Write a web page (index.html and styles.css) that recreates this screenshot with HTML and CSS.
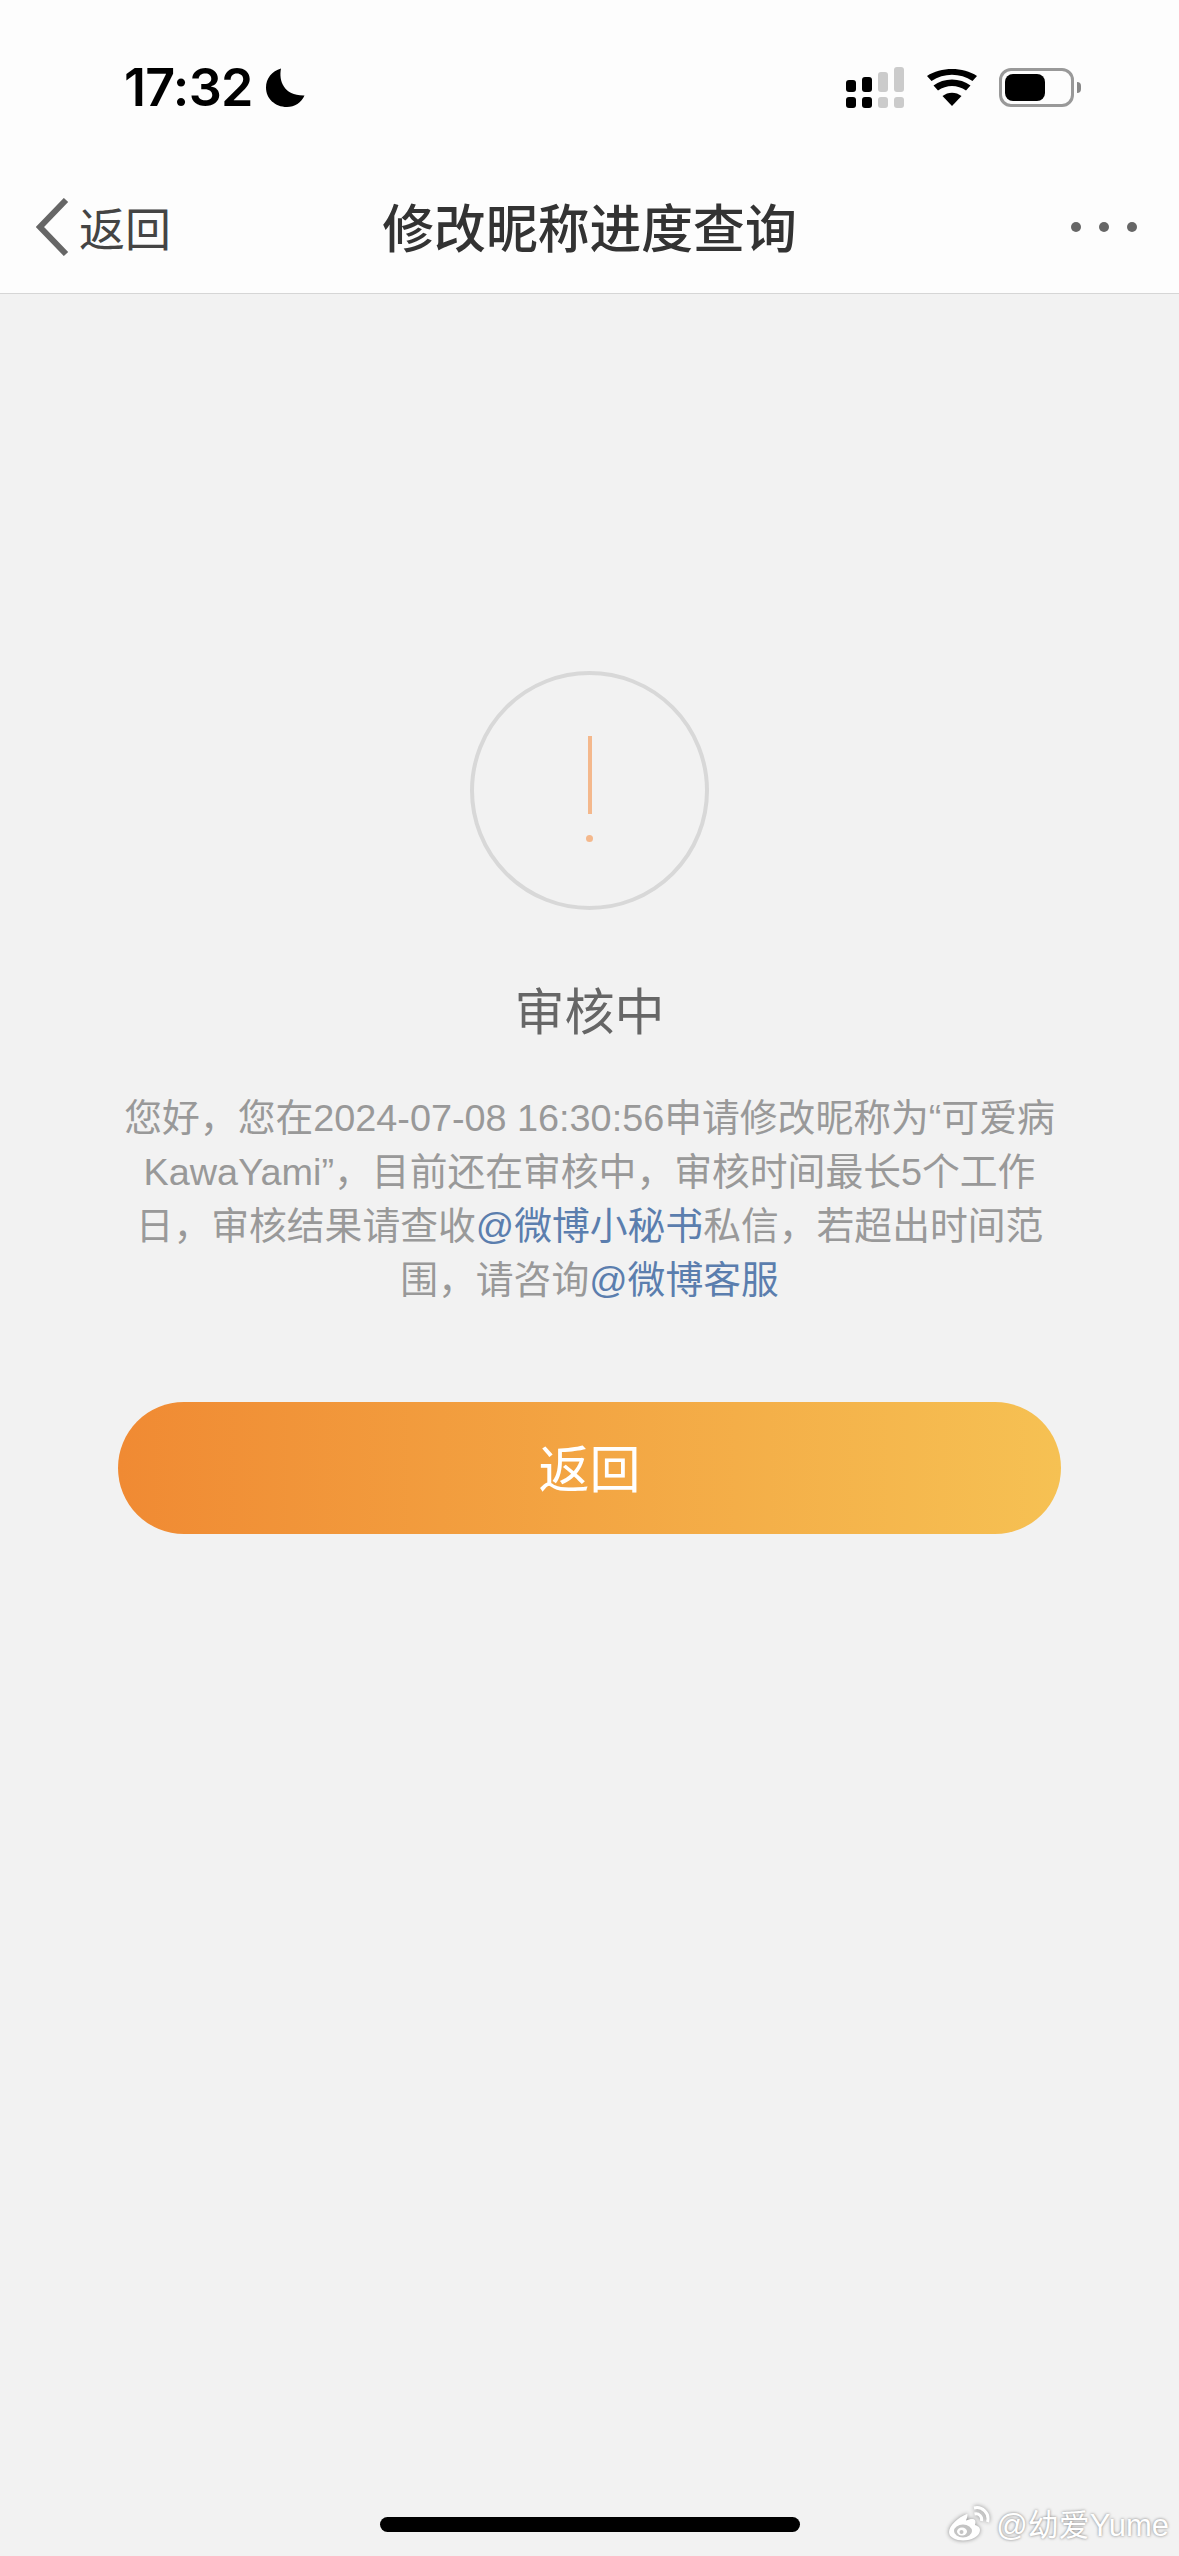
FILE: index.html
```html
<!DOCTYPE html>
<html lang="zh-CN">
<head>
  <meta charset="UTF-8" />
  <meta name="viewport" content="width=device-width, initial-scale=1.0"/>
  <title>修改昵称进度查询</title>
  <link rel="stylesheet" href="styles.css">
</head>
<body>
  <header class="top">
    <!-- Status Bar -->
    <div class="status-bar">
      <div class="status-left">
        <span class="time">17:32</span>
        <svg class="moon" viewBox="0 0 39 39"><path d="M15 0.5C12.5 13 18 28 38.5 27.5C35.5 34.500 28.500 39 21 39C9 39 0 30.500 0 19.500C0 10.500 6 3 15 0.500Z"/></svg>
      </div>
      <div class="status-right">
        <div class="signal">
          <span class="sig-col"><i class="sig-top h1"></i><i class="sig-dot"></i></span>
          <span class="sig-col"><i class="sig-top h2"></i><i class="sig-dot"></i></span>
          <span class="sig-col off"><i class="sig-top h3"></i><i class="sig-dot"></i></span>
          <span class="sig-col off"><i class="sig-top h4"></i><i class="sig-dot"></i></span>
        </div>
        <svg class="wifi" viewBox="0 0 50 37">
          <path d="M25 37L15.500 27C21 22.500 29 22.500 34.500 27Z"/>
          <path d="M11 21.500L6.500 16.500C16.500 8.500 33.500 8.500 43.500 16.500L39 21.500C30.500 15.500 19.500 15.500 11 21.500Z"/>
          <path d="M4.500 12L0 7C14 -2.300 36 -2.300 50 7L45.500 12C33 3.800 17 3.800 4.500 12Z"/>
        </svg>
        <div class="battery">
          <div class="battery-body"><div class="battery-fill"></div></div>
          <div class="battery-nub"></div>
        </div>
      </div>
    </div>

    <!-- Nav Bar -->
    <nav class="nav-bar">
      <div class="nav-back">
        <svg class="chevron" viewBox="0 0 33 58"><path d="M30 2L4 29L30 56"/></svg>
        <span>返回</span>
      </div>
      <h1 class="nav-title">修改昵称进度查询</h1>
      <div class="nav-more"><i></i><i></i><i></i></div>
    </nav>
  </header>

  <main class="content">
    <div class="status-icon">
      <span class="mark-line"></span>
      <span class="mark-dot"></span>
    </div>
    <h2 class="status-title">审核中</h2>
    <p class="status-text">您好，您在2024-07-08 16:30:56申请修改昵称为“可爱病KawaYami”，目前还在审核中，审核时间最长5个工作日，审核结果请查收<a class="link">@微博小秘书</a>私信，若超出时间范围，请咨询<a class="link">@微博客服</a></p>
    <button class="back-btn">返回</button>
  </main>

  <div class="home-row"><div class="home-bar"></div></div>

  <!-- Watermark -->
  <div class="watermark">
    <svg class="wm-logo" viewBox="0 0 41 36">
      <path class="wm-shape" d="M18 9C9 12 0 21 0 27C0 32.500 7 35.500 14 35.500C23 35.500 31 31 31 25C31 21.500 27.500 20.500 26 20C27 17 26.500 14.500 24 14C22 13.700 19.500 14.500 17 15.500C18.500 12 19 8.500 18 9Z"/>
      <ellipse class="wm-hole" cx="14" cy="26" rx="9" ry="6.500"/>
      <ellipse class="wm-shape" cx="13" cy="26.500" rx="5" ry="4"/>
      <circle class="wm-hole" cx="12.500" cy="27" r="2"/>
      <path class="wm-arc" d="M25 3C33 1 41 8 38.500 17"/>
      <path class="wm-arc" d="M25.500 9C30 8 33.500 11.500 32.500 16"/>
    </svg>
    <span class="wm-text">@幼爱Yume</span>
  </div>
</body>
</html>
```

FILE: styles.css
```css
* {
  box-sizing: border-box;
}

body {
  margin: 0;
  position: relative;
  width: 1179px;
  height: 2556px;
  display: flex;
  flex-direction: column;
  background: #f2f2f2;
  font-family: 'Liberation Sans', 'Noto Sans CJK SC', sans-serif;
  overflow: hidden;
}

.top {
  height: 294px;
  background: #fdfdfd;
  border-bottom: 1px solid #d6d6d6;
}

.status-bar {
  height: 170px;
  padding: 67px 98px 0 124px;
  display: flex;
  justify-content: space-between;
  align-items: flex-start;
}

.status-left {
  display: flex;
  align-items: center;
  gap: 13px;
  height: 41px;
}

.time {
  font-family: Inter, sans-serif;
  font-size: 52px;
  font-weight: 600;
  line-height: 41px;
  letter-spacing: -0.7px;
  color: #000;
}

.moon {
  width: 39px;
  height: 39px;
  fill: #000;
}

.status-right {
  display: flex;
  align-items: flex-start;
  height: 41px;
}

.signal {
  display: flex;
  gap: 6px;
  height: 41px;
  margin-right: 23px;
}

.sig-col {
  width: 10px;
  display: flex;
  flex-direction: column;
  justify-content: flex-end;
  gap: 5px;
}

.sig-col i {
  display: block;
  background: #000;
  border-radius: 3px;
}

.sig-col.off i {
  background: #cbcbcb;
}

.sig-top.h1 { height: 12px; }
.sig-top.h2 { height: 15px; }
.sig-top.h3 { height: 20px; }
.sig-top.h4 { height: 25px; }

.sig-dot {
  height: 11px;
}

.wifi {
  width: 50px;
  height: 37px;
  margin-top: 2px;
  margin-right: 22px;
  fill: #000;
}

.battery {
  display: flex;
  align-items: center;
  height: 41px;
  gap: 3px;
}

.battery-body {
  width: 75px;
  height: 39px;
  border: 3px solid #999;
  border-radius: 12px;
  padding: 3px;
}

.battery-fill {
  width: 40px;
  height: 100%;
  background: #000;
  border-radius: 8px;
}

.battery-nub {
  width: 4px;
  height: 11px;
  background: #888;
  border-radius: 0 4px 4px 0;
}

.nav-bar {
  height: 123px;
  display: grid;
  grid-template-columns: 1fr auto 1fr;
  align-items: center;
  padding: 0 36px 10px 36px;
}

.nav-back {
  display: flex;
  align-items: center;
  gap: 10px;
  font-size: 46px;
  color: #444;
}

.nav-back span {
  margin-top: -2px;
}

.chevron {
  width: 33px;
  height: 58px;
  fill: none;
  stroke: #666;
  stroke-width: 6;
}

.nav-title {
  margin: 0 0 2px;
  font-size: 51.800px;
  font-weight: 500;
  color: #333;
}

.nav-more {
  display: flex;
  justify-content: flex-end;
  gap: 18px;
  padding-right: 6px;
}

.nav-more i {
  width: 10px;
  height: 10px;
  border-radius: 50%;
  background: #666;
}

.content {
  flex: 1;
  display: flex;
  flex-direction: column;
  align-items: center;
  padding-top: 377px;
}

.status-icon {
  width: 239px;
  height: 239px;
  border: 4px solid #d8d8d8;
  border-radius: 50%;
  display: flex;
  flex-direction: column;
  align-items: center;
  padding-top: 61px;
}

.mark-line {
  width: 4px;
  height: 78px;
  background: #f4b88c;
}

.mark-dot {
  width: 7px;
  height: 7px;
  margin-top: 21px;
  border-radius: 50%;
  background: #f4b88c;
}

.status-title {
  margin: 68px 0 0;
  font-size: 50px;
  font-weight: 400;
  line-height: 70px;
  color: #666;
}

.status-text {
  margin: 43px 0 0;
  width: 950px;
  font-size: 37.800px;
  line-height: 54px;
  text-align: center;
  color: #999;
}

.link {
  color: #5b7eae;
}

.back-btn {
  margin-top: 95px;
  width: 943px;
  height: 132px;
  padding: 0 0 5px;
  border: none;
  border-radius: 66px;
  background: linear-gradient(to right, #f08a33, #f6c153);
  color: #fff;
  font-family: inherit;
  font-size: 51px;
}

.home-row {
  height: 39px;
  display: flex;
  justify-content: center;
}

.home-bar {
  width: 420px;
  height: 15px;
  border-radius: 8px;
  background: #000;
}

.watermark {
  position: absolute;
  right: 10px;
  bottom: 11px;
  display: flex;
  align-items: center;
  gap: 6px;
}

.wm-logo {
  width: 41px;
  height: 36px;
  filter: drop-shadow(0 0 2px #888);
}

.wm-shape {
  fill: #fff;
}

.wm-hole {
  fill: #c4c4c4;
}

.wm-arc {
  fill: none;
  stroke: #fff;
  stroke-width: 3;
}

.wm-text {
  font-size: 31px;
  color: #fff;
  text-shadow: 0 0 3px #777;
}
```
